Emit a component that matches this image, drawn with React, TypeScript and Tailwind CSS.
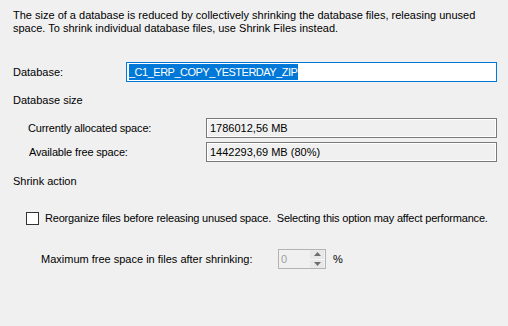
import React from 'react';

// Read-only value box (sunken gray border with white inner line)
const ValueBox = ({ value }: { value: string }) => (
  <div className="w-[291px] h-[20px] border border-[#7a7a7a] shadow-[inset_0_0_0_1px_#ffffff] bg-[#f0f0f0] flex items-center pl-[3px]">
    <span>{value}</span>
  </div>
);

const SpinButtons = () => (
  <div className="flex flex-col w-[14px] h-[18px] mr-[1px]">
    <div className="flex-1 flex items-center justify-center bg-[#e8e8e8] border-b border-[#f5f5f5]">
      <svg width="7" height="4" viewBox="0 0 7 4">
        <path d="M0 4 L3.5 0 L7 4 Z" fill="#6d6d6d" />
      </svg>
    </div>
    <div className="flex-1 flex items-center justify-center bg-[#e8e8e8]">
      <svg width="7" height="4" viewBox="0 0 7 4">
        <path d="M0 0 L7 0 L3.5 4 Z" fill="#6d6d6d" />
      </svg>
    </div>
  </div>
);

export default function App() {
  return (
    <div className="w-[508px] h-[326px] bg-[#f0f0f0] text-black text-[11px] leading-[13px] font-['Liberation_Sans',Arial,sans-serif] pl-[13px] pt-[9px] overflow-hidden">
      {/* Description */}
      <p className="w-[480px]">
        The size of a database is reduced by collectively shrinking the database files, releasing unused space. To shrink individual database files, use Shrink Files instead.
      </p>

      {/* Database name */}
      <div className="flex items-center mt-[27px]">
        <span className="w-[113px]">Database:</span>
        <div className="w-[371px] h-[20px] border border-[#0078d7] bg-white flex items-stretch px-[2px] py-[1px]">
          <span className="bg-[#0078d7] text-white text-[11px] leading-[16px] tracking-[-0.5px] pr-[1px]">
            _C1_ERP_COPY_YESTERDAY_ZIP
          </span>
        </div>
      </div>

      {/* Database size */}
      <div className="mt-[12px]">Database size</div>
      <div className="flex items-center mt-[11px] pl-[15px]">
        <span className="w-[178px] tracking-[-0.15px]">Currently allocated space:</span>
        <ValueBox value="1786012,56 MB" />
      </div>
      <div className="flex items-center mt-[4px] pl-[15px]">
        <span className="w-[178px] pl-[1px] tracking-[-0.15px]">Available free space:</span>
        <ValueBox value="1442293,69 MB (80%)" />
      </div>

      {/* Shrink action */}
      <div className="mt-[13px]">Shrink action</div>
      <label className="flex items-center mt-[24px] pl-[13px] gap-[6px]">
        <span className="w-[13px] h-[13px] border border-[#333333] bg-white" />
        <span className="whitespace-pre tracking-[-0.2px]">
          Reorganize files before releasing unused space.  Selecting this option may affect performance.
        </span>
      </label>

      <div className="flex items-center mt-[24px] pl-[28px]">
        <span className="w-[237px]">Maximum free space in files after shrinking:</span>
        <div className="w-[48px] h-[20px] border border-[#b4b4b4] bg-[#f0f0f0] flex items-center justify-between pl-[2px]">
          <span className="text-[#a0a0a0]">0</span>
          <SpinButtons />
        </div>
        <span className="ml-[7px]">%</span>
      </div>
    </div>
  );
}
